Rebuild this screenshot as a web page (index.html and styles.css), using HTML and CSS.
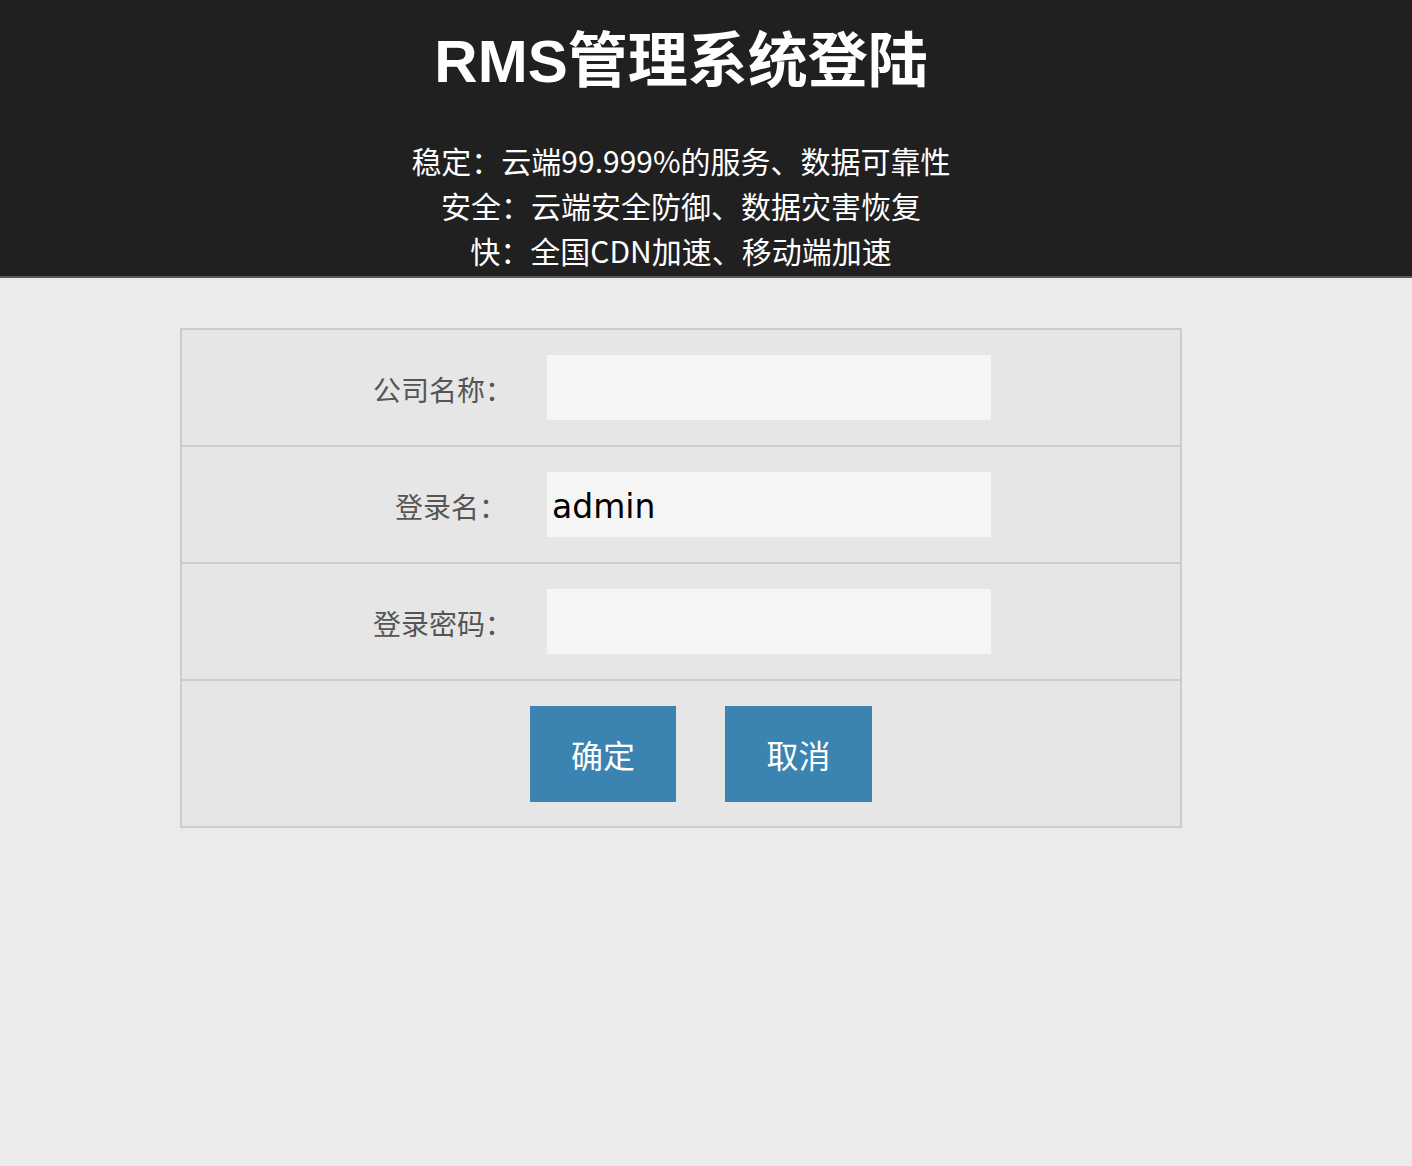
FILE: index.html
```html
<!DOCTYPE html>
<html lang="zh-CN">
<head>
<meta charset="utf-8">
<title>RMS管理系统登陆</title>
<link rel="stylesheet" href="styles.css">
</head>
<body>
<header class="header">
  <div class="container">
    <h1 class="title">RMS管理系统登陆</h1>
    <div class="features">
      <p>稳定：云端99.999%的服务、数据可靠性</p>
      <p>安全：云端安全防御、数据灾害恢复</p>
      <p>快：全国CDN加速、移动端加速</p>
    </div>
  </div>
</header>
<main class="container">
  <form class="login">
    <div class="row">
      <label class="label" for="company">公司名称：</label>
      <div class="field"><input id="company" class="input" type="text"></div>
    </div>
    <div class="row">
      <label class="label label-short" for="user">登录名：</label>
      <div class="field"><input id="user" class="input" type="text" value="admin"></div>
    </div>
    <div class="row">
      <label class="label" for="pwd">登录密码：</label>
      <div class="field"><input id="pwd" class="input" type="password"></div>
    </div>
    <div class="row row-actions">
      <button type="submit" class="btn">确定</button>
      <button type="button" class="btn">取消</button>
    </div>
  </form>
</main>
</body>
</html>
```

FILE: styles.css
```css
* { box-sizing: border-box; }
html, body {
  margin: 0;
  padding: 0;
  background: #ebebeb;
  font-family: "Noto Sans CJK SC", "Noto Sans", sans-serif;
}
.container {
  width: 1362px;
}
.header {
  background: #202020;
  border-bottom: 2px solid #595959;
  color: #fff;
  text-align: center;
  height: 278px;
  padding-top: 26px;
}
.title {
  margin: 0;
  font-family: "Liberation Sans", "Noto Sans CJK SC", sans-serif;
  font-weight: bold;
  font-size: 60px;
  line-height: 72px;
}
.features {
  margin-top: 40px;
}
.features p {
  margin: 0;
  font-size: 30px;
  line-height: 45px;
}
.login {
  margin: 50px 0 0 180px;
  width: 1002px;
  border: 2px solid #cccccc;
  background: #e6e6e6;
}
.row {
  display: flex;
  align-items: center;
  height: 117px;
  border-bottom: 2px solid #cccccc;
}
.label {
  width: 365px;
  padding-right: 34px;
  padding-top: 3px;
  text-align: right;
  font-size: 28px;
  color: #555555;
}
.label-short {
  padding-right: 40px;
}
.field {
  flex: 1;
}
.input {
  display: block;
  width: 444px;
  height: 65px;
  border: 0;
  outline: 0;
  background: #f5f5f5;
  padding: 4px 5px 0;
  font-family: "DejaVu Sans", sans-serif;
  font-size: 33px;
  color: #000;
}
.row-actions {
  height: 145px;
  border-bottom: 0;
  justify-content: center;
  gap: 49px;
  padding-left: 40px;
}
.btn {
  width: 146px;
  height: 96px;
  border: 0;
  padding: 0;
  background: #3b83b1;
  color: #fff;
  font-family: "Noto Sans CJK SC", sans-serif;
  font-size: 32px;
}
.btn + .btn { width: 147px; }
```
